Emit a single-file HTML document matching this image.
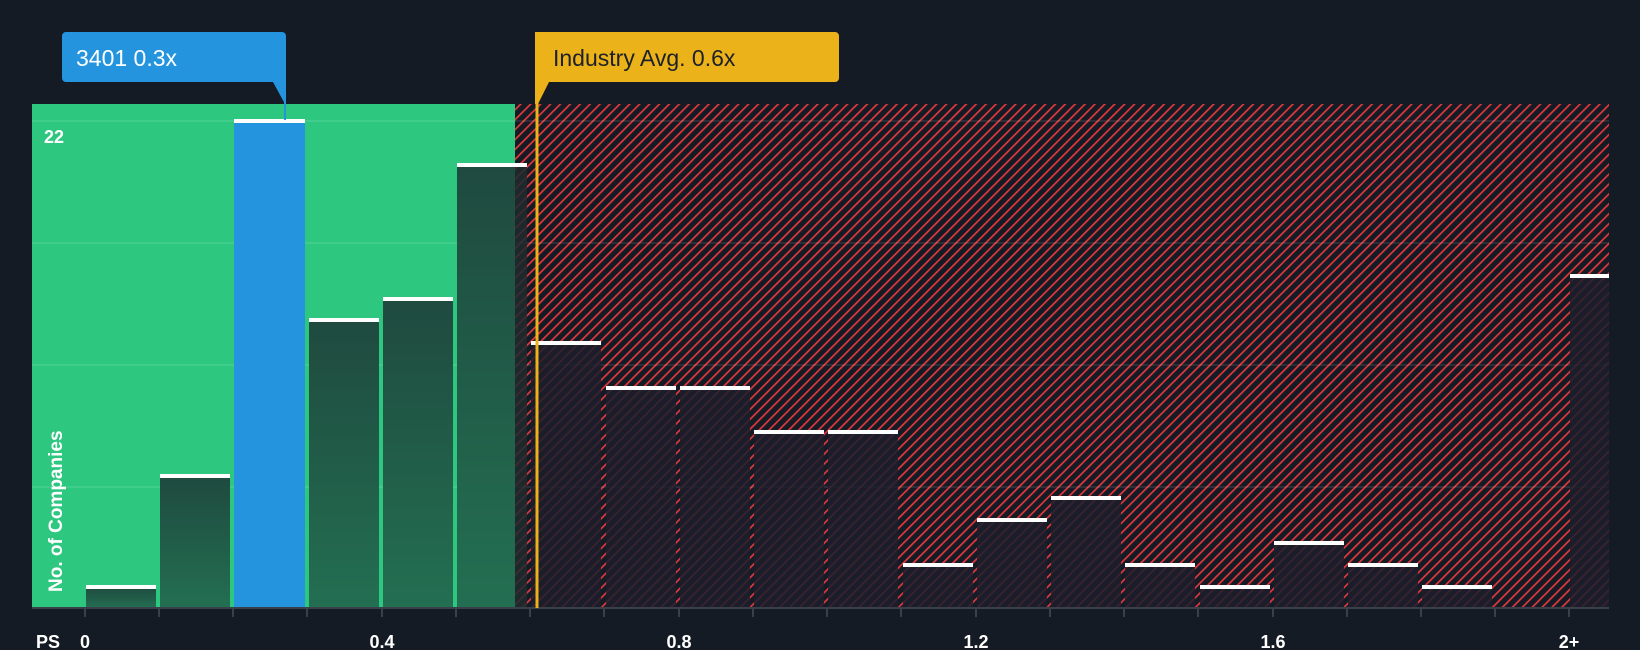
<!DOCTYPE html>
<html><head><meta charset="utf-8"><style>
html,body{margin:0;padding:0;background:#151b24;}
svg{display:block;font-family:"Liberation Sans",Roboto,sans-serif;}
</style></head><body>
<svg width="1640" height="650" viewBox="0 0 1640 650" xmlns="http://www.w3.org/2000/svg">
<defs>
<pattern id="h" patternUnits="userSpaceOnUse" width="7" height="7" patternTransform="rotate(45)">
<rect width="7" height="7" fill="#151b24"/>
<rect x="0" y="0" width="1.7" height="7" fill="#e0383e"/>
</pattern>
<linearGradient id="g" x1="0" y1="0" x2="0" y2="1">
<stop offset="0" stop-color="#1f4a3f"/><stop offset="1" stop-color="#236f52"/>
</linearGradient>
</defs>
<rect width="1640" height="650" fill="#151b24"/>
<rect x="32" y="104" width="483" height="504" fill="#2ec780"/>
<rect x="515" y="104" width="1094" height="504" fill="url(#h)"/>
<g stroke="#ffffff" stroke-opacity="0.12" stroke-width="1.5">
<line x1="32" y1="121" x2="1609" y2="121"/>
<line x1="32" y1="243" x2="1609" y2="243"/>
<line x1="32" y1="365" x2="1609" y2="365"/>
<line x1="32" y1="487" x2="1609" y2="487"/>
</g>
<rect x="86" y="587" width="70" height="21" fill="url(#g)"/>
<rect x="160" y="476" width="70" height="132" fill="url(#g)"/>
<rect x="234" y="121" width="71" height="487" fill="#2494df"/>
<rect x="309" y="320" width="70" height="288" fill="url(#g)"/>
<rect x="383" y="299" width="70" height="309" fill="url(#g)"/>
<rect x="457" y="165" width="58" height="443" fill="url(#g)"/>
<rect x="515" y="165" width="12" height="443" fill="#1e2a2e" fill-opacity="0.85"/>
<g fill="#1c1f2b" fill-opacity="0.85">
<rect x="531" y="343" width="70" height="265"/>
<rect x="606" y="388" width="70" height="220"/>
<rect x="680" y="388" width="70" height="220"/>
<rect x="754" y="432" width="70" height="176"/>
<rect x="828" y="432" width="70" height="176"/>
<rect x="903" y="565" width="70" height="43"/>
<rect x="977" y="520" width="70" height="88"/>
<rect x="1051" y="498" width="70" height="110"/>
<rect x="1125" y="565" width="70" height="43"/>
<rect x="1200" y="587" width="70" height="21"/>
<rect x="1274" y="543" width="70" height="65"/>
<rect x="1348" y="565" width="70" height="43"/>
<rect x="1422" y="587" width="70" height="21"/>
<rect x="1570" y="276" width="39" height="332"/>
</g>
<g fill="#ffffff">
<rect x="86" y="585" width="70" height="4"/>
<rect x="160" y="474" width="70" height="4"/>
<rect x="234" y="119" width="71" height="4"/>
<rect x="309" y="318" width="70" height="4"/>
<rect x="383" y="297" width="70" height="4"/>
<rect x="457" y="163" width="70" height="4"/>
<rect x="531" y="341" width="70" height="4"/>
<rect x="606" y="386" width="70" height="4"/>
<rect x="680" y="386" width="70" height="4"/>
<rect x="754" y="430" width="70" height="4"/>
<rect x="828" y="430" width="70" height="4"/>
<rect x="903" y="563" width="70" height="4"/>
<rect x="977" y="518" width="70" height="4"/>
<rect x="1051" y="496" width="70" height="4"/>
<rect x="1125" y="563" width="70" height="4"/>
<rect x="1200" y="585" width="70" height="4"/>
<rect x="1274" y="541" width="70" height="4"/>
<rect x="1348" y="563" width="70" height="4"/>
<rect x="1422" y="585" width="70" height="4"/>
<rect x="1570" y="274" width="39" height="4"/>
</g>
<line x1="32" y1="608" x2="1609" y2="608" stroke="#3a404a" stroke-width="2"/>
<g stroke="#3a404a" stroke-width="2">
<line x1="85" y1="608" x2="85" y2="617"/><line x1="159" y1="608" x2="159" y2="617"/>
<line x1="233" y1="608" x2="233" y2="617"/><line x1="307" y1="608" x2="307" y2="617"/>
<line x1="382" y1="608" x2="382" y2="617"/><line x1="456" y1="608" x2="456" y2="617"/>
<line x1="530" y1="608" x2="530" y2="617"/><line x1="604" y1="608" x2="604" y2="617"/>
<line x1="679" y1="608" x2="679" y2="617"/><line x1="753" y1="608" x2="753" y2="617"/>
<line x1="827" y1="608" x2="827" y2="617"/><line x1="901" y1="608" x2="901" y2="617"/>
<line x1="976" y1="608" x2="976" y2="617"/><line x1="1050" y1="608" x2="1050" y2="617"/>
<line x1="1124" y1="608" x2="1124" y2="617"/><line x1="1198" y1="608" x2="1198" y2="617"/>
<line x1="1273" y1="608" x2="1273" y2="617"/><line x1="1347" y1="608" x2="1347" y2="617"/>
<line x1="1421" y1="608" x2="1421" y2="617"/><line x1="1495" y1="608" x2="1495" y2="617"/>
<line x1="1569" y1="608" x2="1569" y2="617"/>
</g>
<g fill="#ffffff" font-size="18" font-weight="bold">
<text x="36" y="648">PS</text>
<text x="85" y="648" text-anchor="middle">0</text>
<text x="382" y="648" text-anchor="middle">0.4</text>
<text x="679" y="648" text-anchor="middle">0.8</text>
<text x="976" y="648" text-anchor="middle">1.2</text>
<text x="1273" y="648" text-anchor="middle">1.6</text>
<text x="1569" y="648" text-anchor="middle">2+</text>
<text x="44" y="143">22</text>
</g>
<text x="0" y="0" transform="translate(62,592) rotate(-90)" fill="#ffffff" font-size="19" font-weight="bold">No. of Companies</text>
<line x1="537" y1="100" x2="537" y2="608" stroke="#ecb21a" stroke-width="3"/>
<path d="M535 32 H835 a4 4 0 0 1 4 4 V78 a4 4 0 0 1 -4 4 H549 L538 104 L535 104 Z" fill="#ecb21a"/>
<text x="553" y="66" fill="#1c2129" font-size="23">Industry Avg. 0.6x</text>
<line x1="285" y1="100" x2="285" y2="120" stroke="#2494df" stroke-width="2"/>
<path d="M66 32 H282 a4 4 0 0 1 4 4 V104 H285 L273 82 H66 a4 4 0 0 1 -4 -4 V36 a4 4 0 0 1 4 -4 Z" fill="#2494df"/>
<text x="76" y="66" fill="#ffffff" font-size="23">3401 0.3x</text>
</svg>
</body></html>
